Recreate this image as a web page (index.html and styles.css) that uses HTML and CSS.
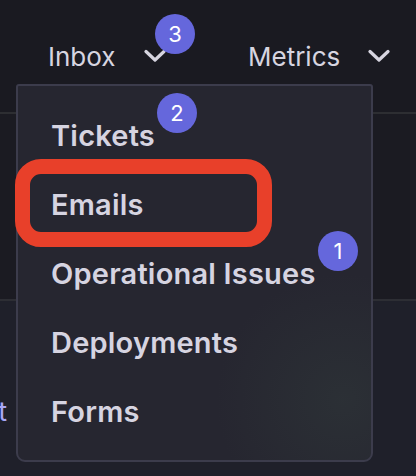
FILE: index.html
```html
<!DOCTYPE html>
<html lang="en">
<head>
    <title>Inbox menu</title>
    <link rel="stylesheet" href="styles.css">
</head>
<body>
    <header class="topbar">
        <nav class="nav">
            <div class="nav-item inbox">
                <span>Inbox</span>
                <svg class="chevron" viewBox="0 0 22 14"><path d="M2 2.5 L11 11 L20 2.5"/></svg>
            </div>
            <div class="nav-item metrics">
                <span>Metrics</span>
                <svg class="chevron" viewBox="0 0 22 14"><path d="M2 2.5 L11 11 L20 2.5"/></svg>
            </div>
        </nav>
    </header>
    <div class="subbar"></div>
    <main class="content">
        <div class="link-row"><a class="link">Submit a request</a></div>
    </main>

    <!-- open dropdown for Inbox -->
    <div class="dropdown">
        <div class="menu-item">Tickets</div>
        <div class="menu-item">Emails</div>
        <div class="menu-item">Operational Issues</div>
        <div class="menu-item">Deployments</div>
        <div class="menu-item">Forms</div>
    </div>

    <div class="highlight"></div>
    <span class="badge b3">3</span>
    <span class="badge b2">2</span>
    <span class="badge b1">1</span>
</body>
</html>
```

FILE: styles.css
```css
body {
    margin: 0;
    background: #1f202a;
    font-family: "Inter", "Noto Sans", sans-serif;
    overflow: hidden;
    height: 476px;
}
.topbar {
    height: 112px;
    background: #1a1a21;
    border-bottom: 2px solid #2d2e32;
}
.nav {
    display: flex;
    height: 100%;
    align-items: center;
    padding-left: 48px;
}
.nav-item {
    display: flex;
    align-items: center;
    font-size: 26px;
    color: #d7d5e0;
}
.inbox {
    gap: 29px;
    width: 200px;
}
.metrics {
    gap: 28px;
}
.chevron {
    width: 22px;
    height: 14px;
    fill: none;
    stroke: #d7d5e0;
    stroke-width: 3.2;
    stroke-linecap: round;
    stroke-linejoin: round;
}
.subbar {
    height: 185px;
    background: #1b1b22;
    border-bottom: 2px solid #2d2e34;
}
.content {
    padding-top: 94px;
}
.link-row {
    display: flex;
    justify-content: flex-end;
    width: 7px;
    white-space: nowrap;
}
.link {
    color: #a9a7f6;
    font-size: 27px;
}
.dropdown {
    position: absolute;
    top: 84px;
    left: 16px;
    width: 320px;
    padding: 15px 0 14px 33px;
    background: #262630;
    background-image: radial-gradient(circle at 92% 84%, rgba(50, 60, 60, 0.45), rgba(38, 38, 48, 0) 28%);
    border: 2px solid #3c3c4c;
    border-radius: 3px 3px 9px 9px;
}
.menu-item {
    height: 69px;
    display: flex;
    align-items: center;
    font-size: 29px;
    font-weight: 600;
    letter-spacing: 0.2px;
    color: #d6d4e1;
}
.highlight {
    position: absolute;
    left: 15px;
    top: 159px;
    width: 227px;
    height: 58px;
    border: 15px solid #e8402a;
    border-radius: 26px;
}
.badge {
    position: absolute;
    width: 40px;
    height: 40px;
    border-radius: 50%;
    background: #6567dc;
    color: #ffffff;
    font-size: 22px;
    display: flex;
    align-items: center;
    justify-content: center;
}
.b3 {
    left: 155px;
    top: 14px;
}
.b2 {
    left: 157px;
    top: 93px;
}
.b1 {
    left: 318px;
    top: 231px;
}
```
